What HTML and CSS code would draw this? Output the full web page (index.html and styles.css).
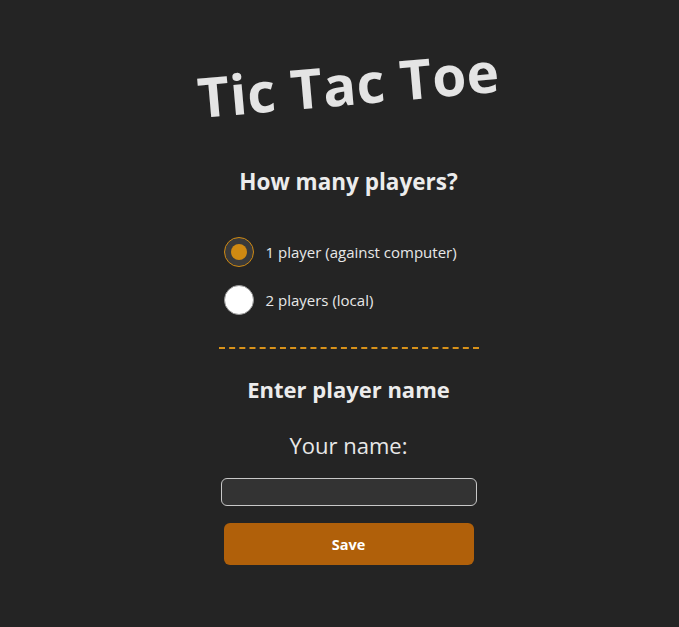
FILE: index.html
```html
<!DOCTYPE html>
<html>
<head>
<meta charset="utf-8">
<link rel="stylesheet" href="styles.css">
</head>
<body>
<main class="page">
  <h1 class="title">Tic Tac Toe</h1>
  <section class="setup">
    <h2 class="heading">How many players?</h2>
    <div class="options">
      <label class="option">
        <span class="radio radio-on"><span class="dot"></span></span>
        <span class="option-text">1 player (against computer)</span>
      </label>
      <label class="option">
        <span class="radio radio-off"></span>
        <span class="option-text">2 players (local)</span>
      </label>
    </div>
    <div class="divider"></div>
    <h2 class="heading heading-name">Enter player name</h2>
    <div class="name-label">Your name:</div>
    <input class="name-input" type="text">
    <button class="save">Save</button>
  </section>
</main>
</body>
</html>
```
FILE: styles.css
```css
html, body {
  margin: 0;
  padding: 0;
  background: #242424;
  color: #e8e8e8;
  font-family: "Open Sans", "Noto Sans", sans-serif;
}
.page {
  display: flex;
  flex-direction: column;
  align-items: center;
  padding-left: 18px;
  padding-top: 44px;
}
.title {
  margin: 0;
  font-size: 55px;
  font-weight: 700;
  color: #e4e4e4;
  transform: rotate(-5deg);
  line-height: 80px;
  letter-spacing: 0.5px;
}
.setup {
  width: 260px;
  display: flex;
  flex-direction: column;
  align-items: center;
  margin-top: 43px;
}
.heading {
  margin: 0;
  font-size: 22.5px;
  font-weight: 700;
  line-height: 30px;
  color: #ececec;
  white-space: nowrap;
}
.options {
  align-self: stretch;
  display: flex;
  flex-direction: column;
  gap: 18px;
  margin-top: 40px;
  padding-left: 5px;
}
.option {
  display: flex;
  align-items: center;
  gap: 12px;
  font-size: 15px;
}
.radio {
  width: 30px;
  height: 30px;
  border-radius: 50%;
  box-sizing: border-box;
  display: flex;
  align-items: center;
  justify-content: center;
}
.radio-on {
  border: 1px solid #d08a12;
  background: #3a3a3a;
}
.dot {
  width: 16px;
  height: 16px;
  border-radius: 50%;
  background: #d08a12;
}
.radio-off {
  background: #ffffff;
  border: 1px solid #999;
}
.divider {
  align-self: stretch;
  border-top: 2px dashed #d8921a;
  margin-top: 32px;
}
.heading-name {
  margin-top: 25px;
  font-size: 22px;
}
.name-label {
  font-size: 22px;
  margin-top: 26px;
  line-height: 30px;
}
.name-input {
  width: 256px;
  height: 28px;
  box-sizing: border-box;
  margin-top: 18px;
  background: #333333;
  border: 1px solid #c8c8c8;
  border-radius: 6px;
  outline: none;
}
.save {
  width: 250px;
  height: 42px;
  margin-top: 17px;
  background: #b0600a;
  color: #ffffff;
  border: none;
  border-radius: 6px;
  font-family: "Open Sans", "Noto Sans", sans-serif;
  font-weight: 700;
  font-size: 14.5px;
}
```
